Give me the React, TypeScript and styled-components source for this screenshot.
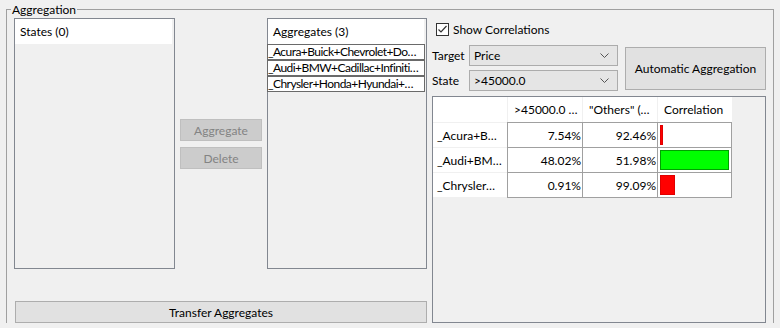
import React from "react";
import styled, { createGlobalStyle } from "styled-components";

const GlobalStyle = createGlobalStyle`
  html, body {
    margin: 0;
    padding: 0;
    background: #f0f0f0;
    overflow: hidden;
  }
  body {
    font-family: Lato, "Noto Sans", sans-serif;
    font-size: 12px;
    color: #000;
  }
`;

const Page = styled.div`
  padding: 9px 6px 0;
`;

const Group = styled.div`
  position: relative;
  border: 1px solid #a0a0a0;
  border-bottom: none;
  padding: 8px 7px 0;
  display: flex;
  gap: 5px;
`;

const Legend = styled.span`
  position: absolute;
  top: -8px;
  left: 4px;
  padding: 0 1px;
  line-height: 15px;
  background: #f0f0f0;
`;

const LeftCol = styled.div`
  width: 413px;
  display: flex;
  flex-direction: column;
`;

const TopRow = styled.div`
  display: flex;
  gap: 5px;
  height: 251px;
`;

const ListBox = styled.div<{ $w: number }>`
  width: ${(p) => p.$w}px;
  box-sizing: border-box;
  border: 1px solid #828790;
  background: #f0f0f0;
  display: flex;
  flex-direction: column;
`;

const ListHeader = styled.div`
  height: 25px;
  margin-right: 2px;
  background: #fff;
  padding-left: 5px;
  display: flex;
  align-items: center;
`;

const ListRow = styled.div`
  height: 16px;
  box-sizing: border-box;
  border: 1px solid #6a6a6a;
  margin: 0 1px 0 -1px;
  background: #fff;
  line-height: 14px;
  letter-spacing: -0.55px;
  white-space: nowrap;
  overflow: hidden;
`;

const ButtonCol = styled.div`
  width: 82px;
  padding-top: 101px;
  display: flex;
  flex-direction: column;
  gap: 6px;
`;

const Button = styled.button<{ $h?: number; $disabled?: boolean }>`
  height: ${(p) => p.$h ?? 22}px;
  box-sizing: border-box;
  margin: 0;
  padding: 0;
  font: inherit;
  background: ${(p) => (p.$disabled ? "#cccccc" : "#e1e1e1")};
  border: 1px solid ${(p) => (p.$disabled ? "#bfbfbf" : "#adadad")};
  color: ${(p) => (p.$disabled ? "#838383" : "#000")};
  cursor: default;
`;

const TransferButton = styled(Button)`
  margin-top: 32px;
  margin-left: 1px;
  width: 412px;
`;

const RightCol = styled.div`
  width: 334px;
  display: flex;
  flex-direction: column;
`;

const CheckRow = styled.label`
  margin: 4px 0 0 4px;
  height: 14px;
  display: flex;
  align-items: center;
  gap: 4px;
`;

const CheckBox = styled.span`
  width: 13px;
  height: 13px;
  box-sizing: border-box;
  border: 1px solid #333;
  background: #fff;
  display: flex;
  align-items: center;
  justify-content: center;
`;

const Controls = styled.div`
  margin-top: 9px;
  display: flex;
  gap: 7px;
`;

const Fields = styled.div`
  display: grid;
  grid-template-columns: 37px 149px;
  row-gap: 4px;
  align-items: center;
`;

const FieldLabel = styled.span``;

const Combo = styled.div`
  height: 21px;
  box-sizing: border-box;
  border: 1px solid #acacac;
  background: #e5e5e5;
  padding: 0 8px 0 4px;
  display: flex;
  align-items: center;
  justify-content: space-between;
`;

const AutoButton = styled(Button)`
  width: 142px;
  margin-top: 2px;
`;

const TablePanel = styled.div`
  margin-top: 5px;
  height: 227px;
  box-sizing: border-box;
  border: 1px solid #828790;
  background: #f0f0f0;
`;

const Grid = styled.div`
  display: grid;
  grid-template-columns: 74px 75px 75px 75px;
  grid-auto-rows: 25px;
  width: 300px;
`;

const HeadCell = styled.div<{ $first?: boolean }>`
  background: #fff;
  border-left: ${(p) => (p.$first ? "none" : "1px solid #f0f0f0")};
  padding-left: 6px;
  display: flex;
  align-items: center;
  white-space: nowrap;
  overflow: hidden;
`;

const RowHead = styled.div`
  background: #fff;
  border-top: 1px solid #f0f0f0;
  padding-left: 4px;
  display: flex;
  align-items: center;
  white-space: nowrap;
`;

const Cell = styled.div<{ $last?: boolean }>`
  background: #fff;
  border-left: 1px solid #a0a0a0;
  border-top: 1px solid #a0a0a0;
  border-right: ${(p) => (p.$last ? "1px solid #a0a0a0" : "none")};
  padding-right: 1px;
  display: flex;
  align-items: center;
  justify-content: flex-end;
`;

const BarCell = styled(Cell)`
  justify-content: flex-start;
  padding: 1px 2px;
`;

const Bar = styled.div<{ $color: string; $border: string }>`
  height: 20px;
  box-sizing: border-box;
  background: ${(p) => p.$color};
  border: 1px solid ${(p) => p.$border};
`;

const GridFoot = styled.div`
  grid-column: 2 / 5;
  border-top: 1px solid #a0a0a0;
  height: 0;
`;

const aggregates = [
  "_Acura+Buick+Chevrolet+Do…",
  "_Audi+BMW+Cadillac+Infiniti…",
  "_Chrysler+Honda+Hyundai+…",
];

const rows = [
  { name: "_Acura+B…", a: "7.54%", b: "92.46%", w: 3, color: "#ff0000", border: "#e00000" },
  { name: "_Audi+BM…", a: "48.02%", b: "51.98%", w: 71, color: "#00ff00", border: "#00a000" },
  { name: "_Chrysler…", a: "0.91%", b: "99.09%", w: 15, color: "#ff0000", border: "#e00000" },
];

function Chevron() {
  return (
    <svg width="9" height="6" viewBox="0 0 9 6">
      <polyline points="0.5,0.5 4.5,4.5 8.5,0.5" fill="none" stroke="#555" strokeWidth="1" />
    </svg>
  );
}

export default function App() {
  return (
    <Page>
      <GlobalStyle />
      <Group>
        <Legend>Aggregation</Legend>
        <LeftCol>
          <TopRow>
            <ListBox $w={161}>
              <ListHeader>States (0)</ListHeader>
            </ListBox>
            <ButtonCol>
              <Button $disabled>Aggregate</Button>
              <Button $disabled>Delete</Button>
            </ButtonCol>
            <ListBox $w={160}>
              <ListHeader>Aggregates (3)</ListHeader>
              {aggregates.map((a) => (
                <ListRow key={a}>{a}</ListRow>
              ))}
            </ListBox>
          </TopRow>
          <TransferButton>Transfer Aggregates</TransferButton>
        </LeftCol>
        <RightCol>
          <CheckRow>
            <CheckBox>
              <svg width="11" height="11" viewBox="0 0 11 11">
                <polyline points="1.5,5.5 4,8 9.5,2" fill="none" stroke="#333" strokeWidth="1.2" />
              </svg>
            </CheckBox>
            Show Correlations
          </CheckRow>
          <Controls>
            <Fields>
              <FieldLabel>Target</FieldLabel>
              <Combo>
                Price
                <Chevron />
              </Combo>
              <FieldLabel>State</FieldLabel>
              <Combo>
                &gt;45000.0
                <Chevron />
              </Combo>
            </Fields>
            <AutoButton $h={43}>Automatic Aggregation</AutoButton>
          </Controls>
          <TablePanel>
            <Grid>
              <HeadCell $first />
              <HeadCell>&gt;45000.0 …</HeadCell>
              <HeadCell>"Others" (…</HeadCell>
              <HeadCell>Correlation</HeadCell>
              {rows.map((r) => (
                <React.Fragment key={r.name}>
                  <RowHead>{r.name}</RowHead>
                  <Cell>{r.a}</Cell>
                  <Cell>{r.b}</Cell>
                  <BarCell $last>
                    <Bar $color={r.color} $border={r.border} style={{ width: r.w }} />
                  </BarCell>
                </React.Fragment>
              ))}
              <div />
              <GridFoot />
            </Grid>
          </TablePanel>
        </RightCol>
      </Group>
    </Page>
  );
}
